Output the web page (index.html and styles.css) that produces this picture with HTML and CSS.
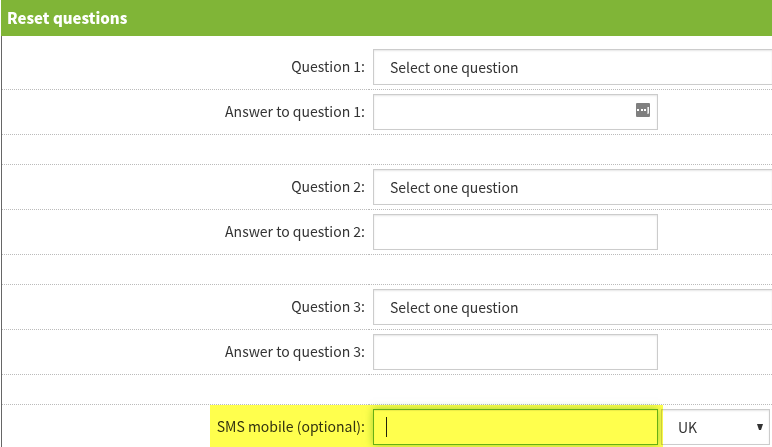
FILE: index.html
```html
<!DOCTYPE html>
<html lang="en">
<head>
<meta charset="utf-8">
<meta name="viewport" content="width=device-width, initial-scale=1">
<title>Reset questions</title>
<link rel="stylesheet" href="styles.css">
</head>
<body>
<form class="panel">
  <h2 class="panel-title">Reset questions</h2>
  <div class="rows">
    <div class="row">
      <label class="label" for="q1">Question 1:</label>
      <div class="field"><select class="control question" id="q1"><option>Select one question</option></select></div>
    </div>
    <div class="row">
      <label class="label" for="a1">Answer to question 1:</label>
      <div class="field">
        <div class="answer">
          <input class="control" id="a1" type="text">
          <button class="fill" type="button" aria-label="Fill in">
            <svg width="14" height="14" viewBox="0 0 14 14" aria-hidden="true">
              <rect width="14" height="14" rx="1" fill="#7f7f7f"/>
              <path d="M1 6h2v2H1zM5 6h2v2H5zM8 6h2v2H8z" fill="#fff"/>
              <path d="M11 4h2v7h-2z" fill="#c4c4c4"/>
              <path d="M12 4h1v6h-1z" fill="#f4f4f4"/>
            </svg>
          </button>
        </div>
      </div>
    </div>
    <div class="row spacer"><span></span><span></span></div>
    <div class="row">
      <label class="label" for="q2">Question 2:</label>
      <div class="field"><select class="control question" id="q2"><option>Select one question</option></select></div>
    </div>
    <div class="row">
      <label class="label" for="a2">Answer to question 2:</label>
      <div class="field"><div class="answer"><input class="control" id="a2" type="text"></div></div>
    </div>
    <div class="row spacer"><span></span><span></span></div>
    <div class="row">
      <label class="label" for="q3">Question 3:</label>
      <div class="field"><select class="control question" id="q3"><option>Select one question</option></select></div>
    </div>
    <div class="row">
      <label class="label" for="a3">Answer to question 3:</label>
      <div class="field"><div class="answer"><input class="control" id="a3" type="text"></div></div>
    </div>
    <div class="row spacer"><span></span><span></span></div>
    <div class="row last">
      <label class="label" for="sms">SMS mobile (optional):</label>
      <div class="field">
        <div class="answer">
          <input class="control active" id="sms" type="tel">
          <span class="caret"></span>
        </div>
        <div class="country">
          <select class="control" aria-label="Country"><option>UK</option></select>
          <svg class="arrow" width="6" height="6" viewBox="0 0 6 6" aria-hidden="true"><path d="M0 0h6L4 6H2z" fill="#333"/></svg>
        </div>
      </div>
      <span class="highlight"></span>
    </div>
  </div>
</form>
</body>
</html>
```
FILE: styles.css
```css
* { box-sizing: border-box; }

body {
  margin: 0;
  background: #fff;
  color: #333;
  font-family: "Noto Sans CJK SC", "Open Sans", sans-serif;
  font-size: 14px;
  line-height: 20px;
}

.panel { margin: 0 0 0 1px; }

.panel-title {
  margin: 0;
  padding: 8px 6px;
  background: #80b537;
  color: #fff;
  font-size: 15px;
  line-height: 20px;
  font-weight: 900;
}

.rows {
  padding-top: 9px;
  border-left: 1px solid #666;
}

.row {
  position: relative;
  display: grid;
  grid-template-columns: 367px minmax(0, 1fr);
}

.row > .label,
.row > .field,
.spacer > span { border-bottom: 1px dotted #bbb; }

.last > .label,
.last > .field {
  border-bottom: 0;
  padding-bottom: 2px;
}

.spacer > span { height: 30px; }

.label {
  padding: 11px 4px 11px 0;
  text-align: right;
}

.field {
  display: flex;
  gap: 3px;
  padding: 4px 0 4px 4px;
}

.control {
  display: block;
  width: 100%;
  height: 36px;
  margin: 0;
  padding: 0 16px;
  border: 1px solid #ccc;
  border-radius: 0;
  outline: 0;
  background: #fff;
  box-shadow: inset 0 1px 2px rgba(0, 0, 0, 0.1);
  color: #333;
  font: inherit;
  appearance: none;
}

.question { border-right: 0; }

.answer {
  position: relative;
  flex: none;
  width: 285px;
}

.fill {
  position: absolute;
  top: 9px;
  right: 8px;
  padding: 0;
  border: 0;
  background: none;
  line-height: 0;
}

.active {
  border-color: #66af40;
  box-shadow: inset 0 1px 1px rgba(0, 0, 0, 0.08), 0 0 8px rgba(102, 175, 64, 0.6);
}

.caret {
  position: absolute;
  top: 8px;
  left: 13px;
  width: 1px;
  height: 20px;
  background: #222;
}

.country {
  position: relative;
  flex: 1;
  margin-right: 2px;
}

.arrow {
  position: absolute;
  top: 15px;
  right: 7px;
}

.highlight {
  position: absolute;
  inset: 0 auto 0 208px;
  width: 453px;
  background: #ffff4d;
  mix-blend-mode: multiply;
  pointer-events: none;
}
```
